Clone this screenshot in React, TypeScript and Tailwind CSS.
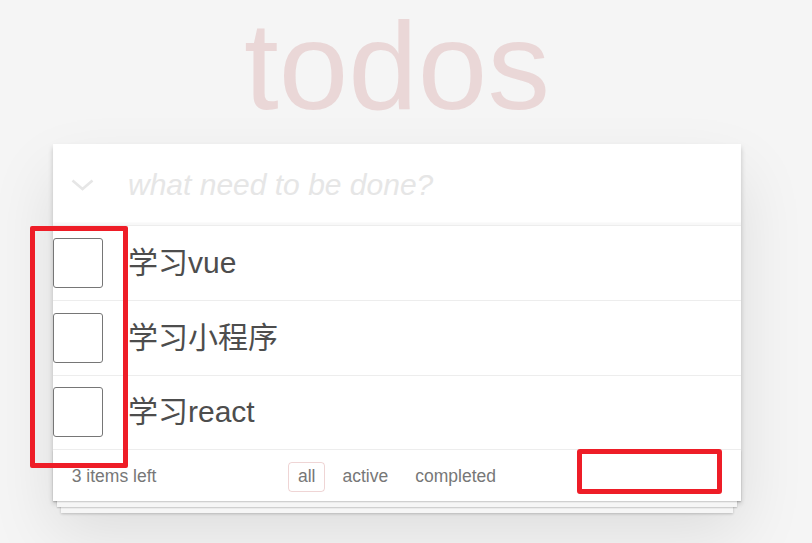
import React from "react";

const todos = ["学习vue", "学习小程序", "学习react"];

const TodoItem = ({ title }: { title: string }) => {
  return (
    <li className="flex items-center h-[74.75px] border-b border-[#ededed]">
      <div className="w-[75px] shrink-0">
        <div className="w-[50px] h-[50px] rounded-[3px] border border-[#767676] bg-white" />
      </div>
      <label className="pr-[18.75px] text-[30px] leading-[36px] text-[#4d4d4d]">
        {title}
      </label>
    </li>
  );
};

export default function App() {
  return (
    <div
      className="relative min-h-[543px] w-full bg-[#f5f5f5] overflow-hidden"
      style={{ fontFamily: '"Liberation Sans", Arial, "Noto Sans CJK SC", sans-serif' }}
    >
      <div className="w-[794px]">
        <h1 className="text-center text-[125px] leading-[132px] text-[rgba(175,47,47,0.15)] font-normal">
          todos
        </h1>
        <section className="mt-[12px] w-[688px] mx-auto bg-white shadow-[0_2.5px_5px_rgba(0,0,0,0.2),0_31px_62px_rgba(0,0,0,0.1)]">
          <header className="flex items-center h-[82px] shadow-[inset_0_-2.5px_1.25px_rgba(0,0,0,0.03)] border-b border-[#ededed]">
            <div className="w-[55px] shrink-0 flex justify-center pl-[4px]">
              <svg width="23" height="12" viewBox="0 0 23 12" fill="none">
                <polyline points="1.5,1.5 11.5,10 21.5,1.5" stroke="#e6e6e6" strokeWidth="2.6" />
              </svg>
            </div>
            <input
              className="flex-1 h-[81px] pl-[20px] pr-[20px] text-[30px] leading-[42px] bg-transparent outline-none text-[#4d4d4d] placeholder:italic placeholder:text-[#e6e6e6]"
              placeholder="what need to be done?"
            />
          </header>
          <ul>
            {todos.map((t) => (
              <TodoItem key={t} title={t} />
            ))}
          </ul>
          <footer className="relative grid grid-cols-[1fr_auto_1fr] items-center h-[51px] pt-[2px] px-[18.75px] text-[17.5px] text-[#777] shadow-[0_1.25px_1.25px_rgba(0,0,0,0.2),0_10px_0_-4px_#f6f6f6,0_11px_1.25px_-4px_rgba(0,0,0,0.2),0_20px_0_-8px_#f6f6f6,0_21px_2.5px_-8px_rgba(0,0,0,0.2)]">
            <span className="leading-[25px]">3 items left</span>
            <ul className="flex items-center">
              <li>
                <a className="mx-[3.75px] block px-[8.75px] py-[3.75px] leading-[21px] rounded-[3.75px] border border-[rgba(175,47,47,0.2)] text-[#777]">
                  all
                </a>
              </li>
              <li>
                <a className="mx-[3.75px] block px-[8.75px] py-[3.75px] leading-[21px] rounded-[3.75px] border border-transparent text-[#777]">
                  active
                </a>
              </li>
              <li>
                <a className="mx-[3.75px] block px-[8.75px] py-[3.75px] leading-[21px] rounded-[3.75px] border border-transparent text-[#777]">
                  completed
                </a>
              </li>
            </ul>
            <span />
          </footer>
        </section>
      </div>

      <div className="absolute left-[30px] top-[226px] w-[98px] h-[242px] border-[5px] border-[#ee1d27] rounded-[2px]" />
      <div className="absolute left-[577px] top-[449px] w-[145px] h-[45px] border-[5px] border-[#ee1d27] rounded-[3px]" />
    </div>
  );
}
